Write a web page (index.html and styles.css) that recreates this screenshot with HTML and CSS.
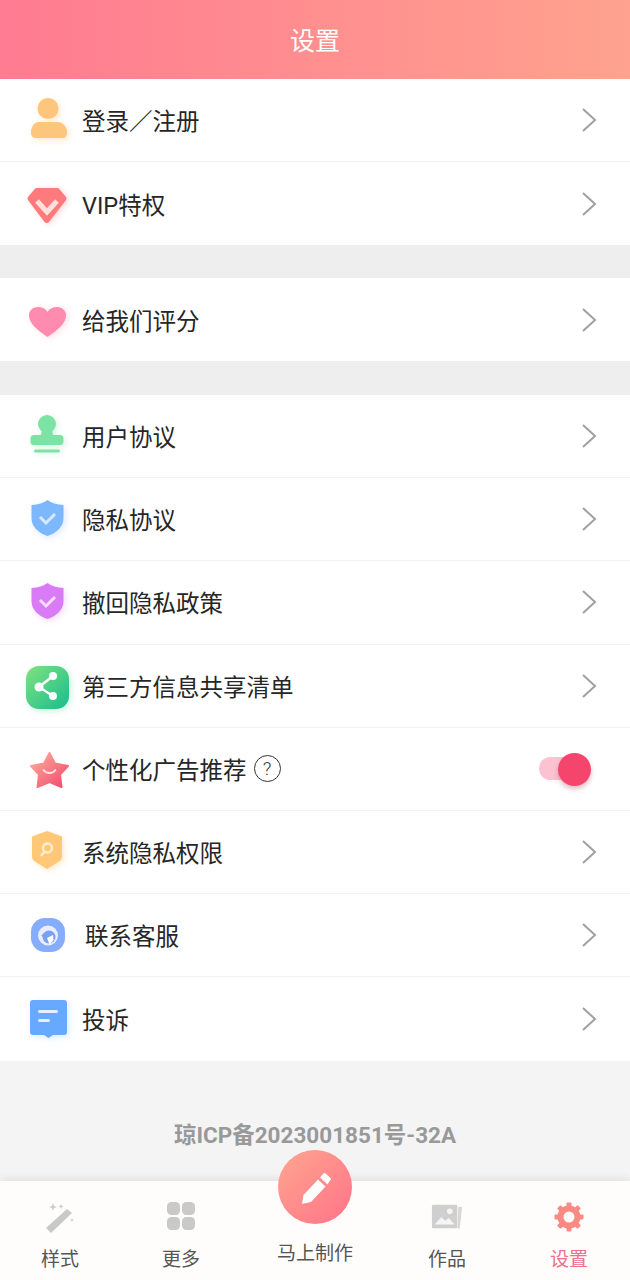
FILE: index.html

```html
<!DOCTYPE html>
<html lang="zh-CN">
<head>
  <meta charset="UTF-8" />
  <meta name="viewport" content="width=device-width, initial-scale=1.0"/>
  <title>设置</title>
  <link rel="stylesheet" href="styles.css">
</head>
<body>
  <div class="page">
    <header class="top-bar">设置</header>

    <main class="content">
      <section class="group">
        <div class="row">
          <svg class="icon glow-orange" viewBox="0 0 50 50"><circle cx="26" cy="13.500" r="10.500" fill="#fec67c"/><path d="M17 27h18c6 0 10 5 10 10v1c0 3-2 5-5 5H14c-3 0-5-2-5-5v-1c0-5 3-10 8-10z" fill="#fec67c"/></svg>
          <span class="label">登录／注册</span>
          <svg class="chevron" viewBox="0 0 16 26"><path d="M2 2l12 11L2 24"/></svg>
        </div>
        <div class="row">
          <svg class="icon glow-red" viewBox="0 0 50 50"><path d="M15 9h20a3 3 0 0 1 2.500 1.300L44 18a3 3 0 0 1-.3 3.500L27 43a3 3 0 0 1-4.500 0L6.300 21.500A3 3 0 0 1 6 18l6.500-7.700A3 3 0 0 1 15 9z" fill="#ff7a7c"/><path d="M15 22l10 11 10-11" fill="none" stroke="#ffe0dc" stroke-width="5"/></svg>
          <span class="label">VIP特权</span>
          <svg class="chevron" viewBox="0 0 16 26"><path d="M2 2l12 11L2 24"/></svg>
        </div>
      </section>

      <section class="group group-gap">
        <div class="row">
          <svg class="icon glow-pink" viewBox="0 0 50 50"><path d="M25.500 42C15 35 7 28 7 20.500 7 15.500 11 12 16 12c4 0 7.500 1.800 9.500 5 2-3.200 5.500-5 9.500-5 5 0 9 3.500 9 8.500C44 28 36 35 25.500 42z" fill="#ff8cb0"/></svg>
          <span class="label">给我们评分</span>
          <svg class="chevron" viewBox="0 0 16 26"><path d="M2 2l12 11L2 24"/></svg>
        </div>
      </section>

      <section class="group group-long">
        <div class="row">
          <svg class="icon glow-green" viewBox="0 0 50 50"><circle cx="25" cy="13" r="9" fill="#7de3a4"/><path d="M20 18h10l1 6h7a3.500 3.500 0 0 1 3.500 3.500v3a3.500 3.500 0 0 1-3.500 3.500H12a3.500 3.500 0 0 1-3.500-3.500v-3A3.500 3.500 0 0 1 12 24h7z" fill="#7de3a4"/><rect x="12" y="38.500" width="26" height="3" rx="1.500" fill="#7de3a4"/></svg>
          <span class="label">用户协议</span>
          <svg class="chevron" viewBox="0 0 16 26"><path d="M2 2l12 11L2 24"/></svg>
        </div>
        <div class="row">
          <svg class="icon glow-blue" viewBox="0 0 50 50"><path d="M25.500 6c4 3 9 4.500 16 5v13c0 9-7 15-16 18-9-3-16-9-16-18V11c7-.5 12-2 16-5z" fill="#7db8ff"/><path d="M18 23l6 6 9-9" fill="none" stroke="#d8e9ff" stroke-width="3"/></svg>
          <span class="label">隐私协议</span>
          <svg class="chevron" viewBox="0 0 16 26"><path d="M2 2l12 11L2 24"/></svg>
        </div>
        <div class="row">
          <svg class="icon glow-purple" viewBox="0 0 50 50"><path d="M25.500 6c4 3 9 4.500 16 5v13c0 9-7 15-16 18-9-3-16-9-16-18V11c7-.5 12-2 16-5z" fill="#d97bf7"/><path d="M18 23l6 6 9-9" fill="none" stroke="#f6dcff" stroke-width="3"/></svg>
          <span class="label">撤回隐私政策</span>
          <svg class="chevron" viewBox="0 0 16 26"><path d="M2 2l12 11L2 24"/></svg>
        </div>
        <div class="row">
          <svg class="icon glow-mint" viewBox="0 0 50 50">
            <defs><linearGradient id="shareFill" x1="0" y1="0" x2="1" y2="1"><stop offset="0" stop-color="#82e27f"/><stop offset="1" stop-color="#16bd8e"/></linearGradient></defs>
            <rect x="4" y="5" width="43" height="43" rx="13" fill="url(#shareFill)"/>
            <path d="M31 15L17 26l14 9" fill="none" stroke="#fff" stroke-width="2.500"/>
            <circle cx="31" cy="15" r="4" fill="#fff"/><circle cx="17" cy="26" r="4.500" fill="#fff"/><circle cx="31" cy="35" r="4" fill="#fff"/>
          </svg>
          <span class="label">第三方信息共享清单</span>
          <svg class="chevron" viewBox="0 0 16 26"><path d="M2 2l12 11L2 24"/></svg>
        </div>
        <div class="row">
          <svg class="icon" viewBox="0 0 50 50">
            <defs><linearGradient id="starFill" x1="0" y1="0" x2="1" y2="1"><stop offset="0" stop-color="#ffb09c"/><stop offset="1" stop-color="#f2476c"/></linearGradient></defs>
            <path d="M27.500 9L33 19.500l13 2.500-8 8.500L39.500 43l-12-5-12 5L17 30.500 9 22l13-2.500z" fill="url(#starFill)" stroke="url(#starFill)" stroke-width="2" stroke-linejoin="round"/>
            <path d="M21.500 26c3 4 9 4 12 0" fill="none" stroke="#ffe3e3" stroke-width="1.800" stroke-linecap="round"/>
          </svg>
          <span class="label">个性化广告推荐</span>
          <span class="help">?</span>
          <span class="toggle"><span class="toggle-knob"></span></span>
        </div>
        <div class="row">
          <svg class="icon glow-orange" viewBox="0 0 50 50"><path d="M25 4l15 5.500V29c0 3-1 4-3 5.500L25 42 13 34.500c-2-1.500-3-2.500-3-5.500V9.500z" fill="#fec877"/><circle cx="25.500" cy="21" r="4.500" fill="none" stroke="#ffeccc" stroke-width="2.500"/><path d="M22 25l-3 4" stroke="#ffeccc" stroke-width="2.500"/></svg>
          <span class="label">系统隐私权限</span>
          <svg class="chevron" viewBox="0 0 16 26"><path d="M2 2l12 11L2 24"/></svg>
        </div>
        <div class="row">
          <svg class="icon" viewBox="0 0 50 50"><rect x="9" y="8" width="34" height="34" rx="14" fill="#86adfb"/><circle cx="26" cy="25.500" r="10" fill="#e6eeff"/><circle cx="27" cy="27" r="6.500" fill="#7aa0f0"/><path d="M25 28l6-3 .5 5-4 4.500z" fill="#fff"/><path d="M19 26l3-3 1.500 4z" fill="#7aa0f0"/></svg>
          <span class="label label-shift">联系客服</span>
          <svg class="chevron" viewBox="0 0 16 26"><path d="M2 2l12 11L2 24"/></svg>
        </div>
        <div class="row">
          <svg class="icon glow-blue" viewBox="0 0 50 50"><path d="M11 6h31a3 3 0 0 1 3 3v29a3 3 0 0 1-3 3H31l-4.500 3-4.500-3H11a3 3 0 0 1-3-3V9a3 3 0 0 1 3-3z" fill="#66a9ff"/><rect x="16" y="16" width="20" height="3" rx="1.500" fill="#e4f0ff"/><rect x="16" y="25" width="12" height="3" rx="1.500" fill="#e4f0ff"/></svg>
          <span class="label">投诉</span>
          <svg class="chevron" viewBox="0 0 16 26"><path d="M2 2l12 11L2 24"/></svg>
        </div>
      </section>

      <p class="record">琼ICP备2023001851号-32A</p>
    </main>

    <nav class="tab-bar">
      <div class="tab">
        <svg class="tab-icon" viewBox="0 0 32 32"><path d="M2 27L23 8l5 4-21 20z" fill="#c9c9c9"/><path d="M9 2l1 3 3 1-3 1-1 3-1-3-3-1 3-1zM17 3l.7 1.800 1.800.7-1.800.7L17 8l-.7-1.800-1.800-.7 1.800-.7zM28 17l.6 1.400 1.400.6-1.400.6-.6 1.400-.6-1.400-1.400-.6 1.400-.6z" fill="#c9c9c9"/></svg>
        <span class="tab-text">样式</span>
      </div>
      <div class="tab">
        <svg class="tab-icon" viewBox="0 0 32 32"><rect x="2" y="1" width="13" height="13" rx="4.500" fill="#c9c9c9"/><rect x="17" y="1" width="13" height="13" rx="4.500" fill="#c9c9c9"/><rect x="2" y="16" width="13" height="13" rx="4.500" fill="#c9c9c9"/><rect x="17" y="16" width="13" height="13" rx="4.500" fill="#c9c9c9"/></svg>
        <span class="tab-text">更多</span>
      </div>
      <div class="tab tab-center">
        <span class="fab"><svg class="fab-icon" viewBox="0 0 36 36"><path d="M5 35l1.500-9L21 10.500l7.500 7L14 33z" fill="#fff"/><path d="M23 8.500L26 5c1-1.200 2-1.200 3 0l4 3.500c1.200 1 1.200 2 0 3l-2.500 4z" fill="#fff"/></svg></span>
        <span class="tab-text">马上制作</span>
      </div>
      <div class="tab">
        <svg class="tab-icon" viewBox="0 0 34 32"><path d="M29 5l4 .5-2.500 23-2-.2z" fill="#d6d6d6"/><rect x="1" y="3" width="27" height="25" rx="1.500" fill="#cfcfcf"/><path d="M4 24l7-8 4 4 4-3 6 7z" fill="#f5f5f5"/><circle cx="20" cy="10" r="3" fill="#f5f5f5"/></svg>
        <span class="tab-text">作品</span>
      </div>
      <div class="tab">
        <svg class="tab-icon" viewBox="0 0 32 32">
          <circle cx="16" cy="16" r="8.500" fill="none" stroke="#fb8a84" stroke-width="6"/>
          <g fill="#fb8a84">
            <rect x="13.500" y="1.500" width="5" height="5" rx="1"/>
            <rect x="13.500" y="1.500" width="5" height="5" rx="1" transform="rotate(45 16 16)"/>
            <rect x="13.500" y="1.500" width="5" height="5" rx="1" transform="rotate(90 16 16)"/>
            <rect x="13.500" y="1.500" width="5" height="5" rx="1" transform="rotate(135 16 16)"/>
            <rect x="13.500" y="1.500" width="5" height="5" rx="1" transform="rotate(180 16 16)"/>
            <rect x="13.500" y="1.500" width="5" height="5" rx="1" transform="rotate(225 16 16)"/>
            <rect x="13.500" y="1.500" width="5" height="5" rx="1" transform="rotate(270 16 16)"/>
            <rect x="13.500" y="1.500" width="5" height="5" rx="1" transform="rotate(315 16 16)"/>
          </g>
        </svg>
        <span class="tab-text tab-text-active">设置</span>
      </div>
    </nav>
  </div>
</body>
</html>
```

FILE: styles.css

```css
* { box-sizing: border-box; }
html, body { margin: 0; padding: 0; }
body { font-family: Roboto, "Noto Sans CJK SC", sans-serif; color: #262626; background: #f4f4f4; }

.page { display: flex; flex-direction: column; height: 1280px; width: 630px; overflow: hidden; }

.top-bar { height: 79px; flex: none; padding-bottom: 2px; display: flex; align-items: center; justify-content: center; font-size: 25px; color: #fff; background: linear-gradient(90deg, #ff7b91, #ffa28e); }

.content { flex: 1; background: #f4f4f4; display: flex; flex-direction: column; }
.group { background: #fff; }
.group-gap { border-top: 33px solid #eee; }
.group-long { border-top: 34.5px solid #eee; }

.row { height: 83px; display: flex; align-items: center; padding: 0 33px 0 22px; border-bottom: 1px solid #f2f2f2; }
.row:last-child { border-bottom: 0; }
.group-long .row { height: 83.2px; }

.icon { width: 50px; height: 50px; flex: none; margin-right: 10px; }
.glow-orange { filter: drop-shadow(2px 2px 3px #ffe9cc); }
.glow-red { filter: drop-shadow(2px 1px 3px #ffd6d6); }
.glow-pink { filter: drop-shadow(2px 1px 3px #ffdbe6); }
.glow-green { filter: drop-shadow(2px 2px 3px #d6f6e2); }
.glow-blue { filter: drop-shadow(2px 2px 3px #dcebff); }
.glow-purple { filter: drop-shadow(2px 2px 3px #f5dcff); }
.glow-mint { filter: drop-shadow(2px 2px 3px #ccf5df); }

.label { font-size: 23.5px; line-height: 30px; margin-top: 4px; }
.label-shift { margin-left: 3px; }

.chevron { width: 16px; height: 26px; margin-left: auto; fill: none; stroke: #a0a0a0; stroke-width: 2; }

.help { width: 27px; height: 27px; margin-left: 7px; border: 1.300px solid #333; border-radius: 50%; display: flex; align-items: center; justify-content: center; font-size: 19px; font-weight: 300; color: #333; }

.toggle { margin-left: auto; margin-right: 22px; width: 36px; height: 23px; border-radius: 12px; background: #fbc3d1; position: relative; }
.toggle-knob { position: absolute; right: -16px; top: -4px; width: 33px; height: 33px; border-radius: 50%; background: #f5456c; box-shadow: 0 3px 5px rgba(160, 60, 90, .35); }

.record { margin: 60px 0 0; text-align: center; font-size: 22.5px; line-height: 28px; font-weight: 700; color: #999; }

.tab-bar { height: 99px; flex: none; display: grid; grid-template-columns: 120px 122px 146px 118px 124px; background: #fffdfb; box-shadow: 0 -3px 8px rgba(0, 0, 0, .07); position: relative; }

.tab { display: flex; flex-direction: column; align-items: center; padding-top: 20px; position: relative; }
.tab:last-child { padding-left: 2px; }
.tab-icon { width: 32px; height: 32px; flex: none; }
.tab-text { margin-top: 14px; font-size: 19px; line-height: 26px; color: #555; }
.tab-text-active { color: #ec6f8c; }
.tab-center { padding-top: 60px; }
.tab-center .tab-text { margin-top: 0; }

.fab { position: absolute; top: -31px; left: 36px; width: 74px; height: 74px; border-radius: 50%; background: linear-gradient(135deg, #ffa58f, #ff7389); display: flex; align-items: center; justify-content: center; }
.fab-icon { width: 36px; height: 36px; }
```
